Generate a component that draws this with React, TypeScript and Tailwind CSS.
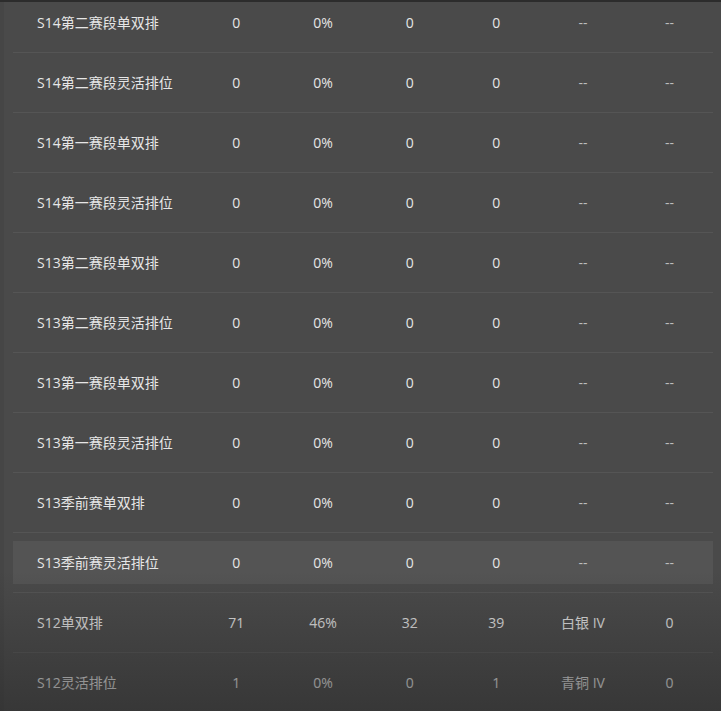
const rows: { name: string; cells: string[] }[] = [
  { name: "S14第二赛段单双排", cells: ["0", "0%", "0", "0", "--", "--"] },
  { name: "S14第二赛段灵活排位", cells: ["0", "0%", "0", "0", "--", "--"] },
  { name: "S14第一赛段单双排", cells: ["0", "0%", "0", "0", "--", "--"] },
  { name: "S14第一赛段灵活排位", cells: ["0", "0%", "0", "0", "--", "--"] },
  { name: "S13第二赛段单双排", cells: ["0", "0%", "0", "0", "--", "--"] },
  { name: "S13第二赛段灵活排位", cells: ["0", "0%", "0", "0", "--", "--"] },
  { name: "S13第一赛段单双排", cells: ["0", "0%", "0", "0", "--", "--"] },
  { name: "S13第一赛段灵活排位", cells: ["0", "0%", "0", "0", "--", "--"] },
  { name: "S13季前赛单双排", cells: ["0", "0%", "0", "0", "--", "--"] },
  { name: "S13季前赛灵活排位", cells: ["0", "0%", "0", "0", "--", "--"] },
  { name: "S12单双排", cells: ["71", "46%", "32", "39", "白银 IV", "0"] },
  { name: "S12灵活排位", cells: ["1", "0%", "0", "1", "青铜 IV", "0"] },
];

export default function App() {
  return (
    <div className="relative h-[711px] w-[721px] overflow-hidden border-t-2 border-[#2c2c2c] bg-[#4a4a4a] font-['Open_Sans','Noto_Sans_CJK_SC',sans-serif] text-[14px]">
      <div className="absolute left-0 top-0 h-full w-[4px] bg-[#464646]" />
      <div className="-mt-[9px] ml-[13px] w-[700px]">
        {rows.map((row, i) => {
          const hovered = i === 9;
          return (
            <div key={row.name} className="border-b border-[#555555] py-2">
              <div
                className={`flex h-[43px] items-center ${hovered ? "bg-[#545454]" : ""}`}
              >
                <div className="w-[180px] pl-6 text-[#e6e6e6]">{row.name}</div>
                {row.cells.map((c, j) => (
                  <div
                    key={j}
                    className={`w-[86.67px] text-center ${c === "--" ? "text-[#bdbdbd]" : "text-[#e6e6e6]"}`}
                  >
                    {c}
                  </div>
                ))}
              </div>
            </div>
          );
        })}
      </div>
      <div className="pointer-events-none absolute bottom-0 left-0 h-[140px] w-full bg-gradient-to-b from-[rgba(40,40,40,0)] to-[rgba(40,40,40,0.55)]" />
    </div>
  );
}
